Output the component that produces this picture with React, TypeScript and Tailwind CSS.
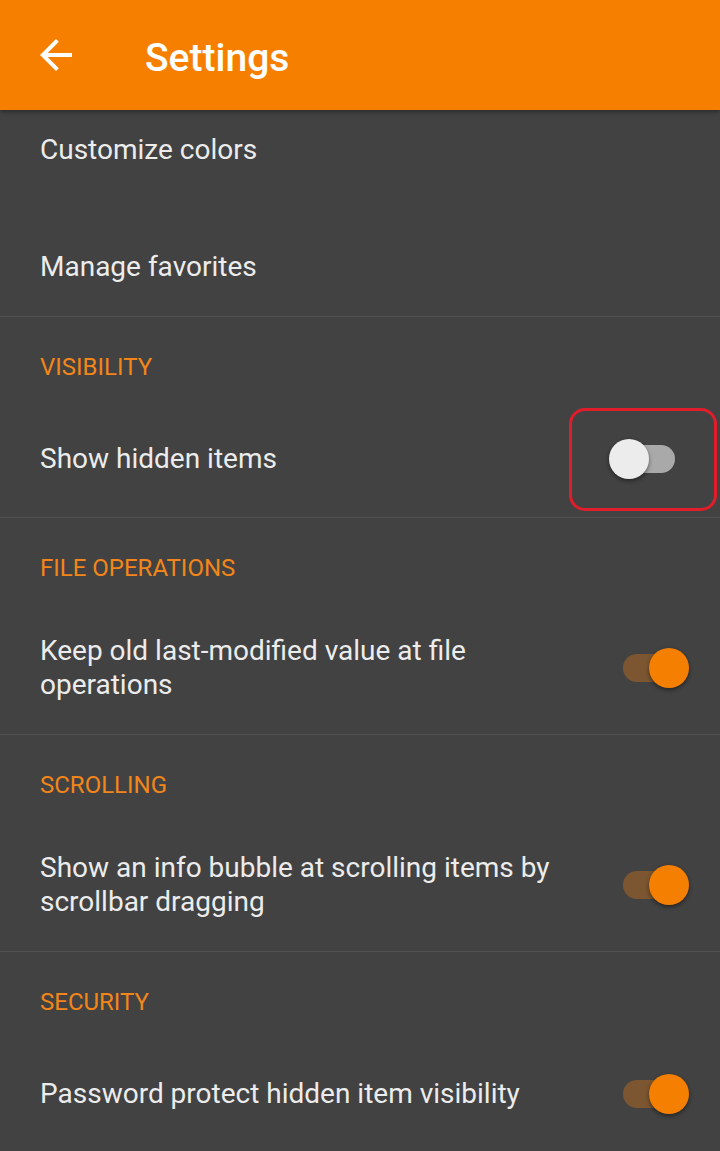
import React from 'react';

function Toggle({ on }: { on: boolean }) {
  return (
    <div className={`relative h-10 w-[66px] shrink-0 ${on ? 'mr-[31px]' : 'mr-[45px]'}`}>
      <div
        className={`absolute top-1/2 -translate-y-1/2 h-[28px] rounded-full ${
          on ? 'left-0 right-[4px] bg-[#7c5631]' : 'left-[4px] right-0 bg-[#a9a9a9]'
        }`}
      />
      <div
        className={`absolute top-0 h-10 w-10 rounded-full shadow-[0_2px_4px_rgba(0,0,0,0.45)] ${
          on ? 'right-0 bg-[#f57f00]' : 'left-0 bg-[#ececec]'
        }`}
      />
    </div>
  );
}

function Section({ title, children, last }: { title: string; children: React.ReactNode; last?: boolean }) {
  return (
    <div className={last ? '' : 'border-b border-[#515151]'}>
      <div className="h-[84px] pt-[36px] pl-10 text-[24px] leading-[28px] text-[#f2861a]">{title}</div>
      {children}
    </div>
  );
}

function ToggleRow({ label, on, highlight }: { label: string; on: boolean; highlight?: boolean }) {
  return (
    <div className="relative flex min-h-[116px] items-center justify-between py-[32px] pl-10">
      <div className="max-w-[560px] text-[28px] leading-[34px] text-[#ececec]">{label}</div>
      <Toggle on={on} />
      {highlight && (
        <div className="absolute top-[7px] bottom-[6px] right-[3px] w-[148px] rounded-[16px] border-[3px] border-[#e11d2a]" />
      )}
    </div>
  );
}

export default function App() {
  return (
    <div className="h-[1151px] w-[720px] overflow-hidden bg-[#424242] font-['Roboto',sans-serif]">
      <header className="relative z-10 flex h-[110px] items-center bg-[#f77f00] shadow-[0_2px_4px_rgba(0,0,0,0.35)]">
        <svg className="ml-8 h-12 w-12" viewBox="0 0 24 24" fill="white">
          <path d="M20 11H7.83l5.59-5.59L12 4l-8 8 8 8 1.41-1.41L7.83 13H20v-2z" />
        </svg>
        <h1 className="ml-[65px] pt-[6px] text-[39px] font-medium leading-[44px] text-white">Settings</h1>
      </header>

      <div className="border-b border-[#515151] pt-[23px] pb-[32px] pl-10 text-[28px] leading-[34px] text-[#ececec]">
        <div>Customize colors</div>
        <div className="mt-[83px]">Manage favorites</div>
      </div>

      <Section title="VISIBILITY">
        <ToggleRow label="Show hidden items" on={false} highlight />
      </Section>
      <Section title="FILE OPERATIONS">
        <ToggleRow label="Keep old last-modified value at file operations" on />
      </Section>
      <Section title="SCROLLING">
        <ToggleRow label="Show an info bubble at scrolling items by scrollbar dragging" on />
      </Section>
      <Section title="SECURITY" last>
        <ToggleRow label="Password protect hidden item visibility" on />
      </Section>
    </div>
  );
}
